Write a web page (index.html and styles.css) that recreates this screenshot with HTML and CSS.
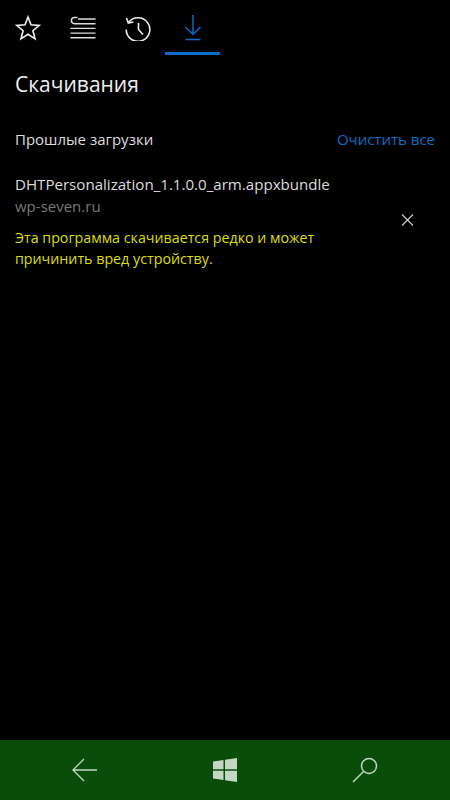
FILE: index.html
```html
<!DOCTYPE html>
<html lang="ru">
<head>
<meta charset="utf-8">
<title>Скачивания</title>
<link rel="stylesheet" href="styles.css">
</head>
<body>
<div class="screen">
  <main class="main">
    <nav class="tabs">
      <div class="tab">
        <svg width="26" height="26" viewBox="0 0 26 26" fill="none" stroke="#eee" stroke-width="1.6"><path d="M13 2l3 7.800 8.300.6-6.400 5.300 2.100 8.100-7-4.500-7 4.500 2.100-8.100-6.400-5.300 8.300-.6z"/></svg>
      </div>
      <div class="tab">
        <svg width="26" height="26" viewBox="0 0 26 26" fill="none" stroke="#ddd" stroke-width="1.400"><path d="M8 4h17.500M6 8.700h19.500M.500 13.400h25M.500 18.100h25M.500 22.800h25M7.500 2.500H4.500a3.100 3.100 0 0 0 0 6.200H6"/></svg>
      </div>
      <div class="tab">
        <svg width="26" height="26" viewBox="0 0 26 26" fill="none" stroke="#eee" stroke-width="1.600"><path d="M3.500 7.500A11.800 11.800 0 1 1 1.200 14.500M1.500 3l1.800 5 5-1M13.500 8v6.500l4.500 5"/></svg>
      </div>
      <div class="tab tab-active">
        <svg width="26" height="26" viewBox="0 0 26 26" fill="none" stroke="#0a6cc4" stroke-width="1.500"><path d="M13 0v19M5.500 12l7.500 7.500 7.500-7.500M5.500 24.500h15"/></svg>
      </div>
    </nav>
    <h1 class="title">Скачивания</h1>
    <div class="section-head">
      <span class="section-name">Прошлые загрузки</span>
      <span class="clear">Очистить все</span>
    </div>
    <div class="item">
      <div class="item-text">
        <div class="file">DHTPersonalization_1.1.0.0_arm.appxbundle</div>
        <div class="source">wp-seven.ru</div>
        <div class="warning">Эта программа скачивается редко и может причинить вред устройству.</div>
      </div>
      <svg class="close" width="14" height="14" viewBox="0 0 14 14" fill="none" stroke="#ccc" stroke-width="1.200"><path d="M2 .5l11 11M13 .5l-11 11"/></svg>
    </div>
  </main>
  <footer class="navbar">
    <svg class="nav-icon" width="26" height="24" viewBox="0 0 26 24" fill="none" stroke="#c4d6c4" stroke-width="1.300"><path d="M25 12H1M12 1L1 12l11 11"/></svg>
    <svg class="nav-icon" width="24" height="24" viewBox="0 0 24 24" fill="#c4d6c4"><path d="M0 3.500l10.500-1.500v9.300H0zM12 1.800L24 0v11.300H12zM0 12.700h10.500V22L0 20.500zM12 12.700h12V24l-12-1.800z"/></svg>
    <svg class="nav-icon" width="26" height="26" viewBox="0 0 26 26" fill="none" stroke="#c4d6c4" stroke-width="1.500"><circle cx="17" cy="9" r="7.500"/><path d="M11.500 14.500L1 25"/></svg>
  </footer>
</div>
</body>
</html>
```
FILE: styles.css
```css
* { box-sizing: border-box; }
html, body { margin: 0; padding: 0; }
body {
  background: #000;
  font-family: "Open Sans", "Noto Sans", sans-serif;
}
.screen {
  width: 450px;
  height: 800px;
  display: flex;
  flex-direction: column;
}
.main { flex: 1; }
.tabs { display: flex; height: 55px; }
.tab {
  width: 55px;
  display: flex;
  justify-content: center;
  padding-top: 15px;
}
.tab-active { border-bottom: 3px solid #0a6cc4; }
.title {
  margin: 15px 0 0 15px;
  font-size: 21px;
  line-height: 28px;
  font-weight: 400;
  color: #eee;
}
.section-head {
  display: flex;
  justify-content: space-between;
  align-items: center;
  margin-top: 30px;
  padding: 0 15px;
  font-size: 15px;
  line-height: 22px;
}
.section-name { color: #ddd; }
.clear { color: #0a6cc4; }
.item {
  display: flex;
  align-items: center;
  justify-content: space-between;
  margin-top: 23px;
  padding: 0 36px 0 15px;
}
.item-text { width: 330px; }
.file { font-size: 15.100px; line-height: 22px; color: #ddd; white-space: nowrap; }
.source { font-size: 15px; line-height: 22px; color: #777; }
.warning { margin-top: 11px; font-size: 14.250px; line-height: 20.500px; color: #dede00; }
.close { flex: none; }
.navbar {
  height: 60px;
  background: #0a4c0a;
  display: grid;
  grid-template-columns: 139px 141px 140px;
  align-items: center;
  padding-left: 15px;
}
.nav-icon { justify-self: center; }
```
